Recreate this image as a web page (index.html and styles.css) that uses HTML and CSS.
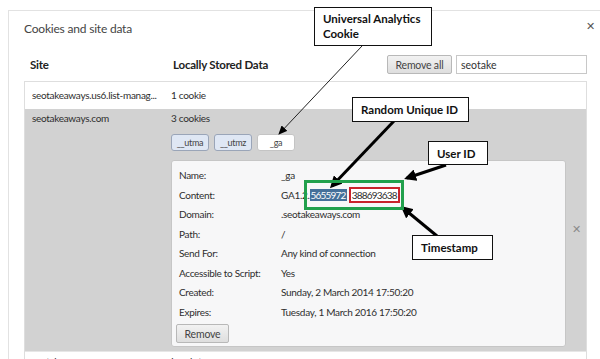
FILE: index.html
```html
<!DOCTYPE html>
<html lang="en">

<head>
    <meta charset="UTF-8">
    <title>Cookies and site data</title>
    <link rel="stylesheet" href="styles.css">
</head>

<body>
    <div class="dialog">
        <!-- Title bar -->
        <div class="titlebar">
            <h1>Cookies and site data</h1>
            <span class="close">&#x2715;</span>
        </div>

        <!-- Column headers, remove all and search -->
        <div class="toolbar">
            <div class="col-site">Site</div>
            <div class="col-data">Locally Stored Data</div>
            <button class="btn">Remove all</button>
            <input class="search" type="text" value="seotake">
        </div>

        <!-- Site list -->
        <div class="list">
            <div class="row">
                <div class="site">seotakeaways.us6.list-manag...</div>
                <div class="data">1 cookie</div>
            </div>

            <div class="row selected">
                <div class="site">seotakeaways.com</div>
                <div class="data">
                    <div>3 cookies</div>
                    <div class="chips">
                        <span class="chip">__utma</span>
                        <span class="chip">__utmz</span>
                        <span class="chip active">_ga</span>
                    </div>
                    <div class="details">
                        <div class="field"><span class="label">Name:</span><span>_ga</span></div>
                        <div class="field"><span class="label">Content:</span><span>GA1.2.<span class="sel">5655972</span> <span class="mark">388693638</span></span></div>
                        <div class="field"><span class="label">Domain:</span><span>.seotakeaways.com</span></div>
                        <div class="field"><span class="label">Path:</span><span>/</span></div>
                        <div class="field"><span class="label">Send For:</span><span>Any kind of connection</span></div>
                        <div class="field"><span class="label">Accessible to Script:</span><span>Yes</span></div>
                        <div class="field"><span class="label">Created:</span><span>Sunday, 2 March 2014 17:50:20</span></div>
                        <div class="field"><span class="label">Expires:</span><span>Tuesday, 1 March 2016 17:50:20</span></div>
                        <button class="btn small">Remove</button>
                    </div>
                </div>
                <span class="delete">&#x2715;</span>
            </div>

            <div class="row last">
                <div class="site">seotakeaways.com</div>
                <div class="data">Local storage</div>
            </div>
        </div>
    </div>

    <!-- Annotations drawn over the screenshot -->
    <div class="notes">
        <svg class="arrows" width="600" height="359" viewBox="0 0 600 359">
            <defs>
                <marker id="head" markerWidth="4" markerHeight="4" refX="3" refY="2" orient="auto" markerUnits="strokeWidth">
                    <path d="M0,0 L4,2 L0,4 z" fill="#000"/>
                </marker>
                <marker id="headthin" markerWidth="9" markerHeight="8" refX="8" refY="4" orient="auto" markerUnits="userSpaceOnUse">
                    <path d="M0,0 L9,4 L0,8 z" fill="#000"/>
                </marker>
            </defs>
            <line x1="362" y1="46" x2="279" y2="134" stroke="#222" stroke-width="1" marker-end="url(#headthin)"/>
            <line x1="394" y1="121" x2="332" y2="186" stroke="#000" stroke-width="3" marker-end="url(#head)"/>
            <line x1="446" y1="165" x2="407" y2="178" stroke="#000" stroke-width="3" marker-end="url(#head)"/>
            <line x1="437" y1="236" x2="403" y2="208" stroke="#000" stroke-width="3" marker-end="url(#head)"/>
        </svg>
        <div class="note note-ua">Universal Analytics<br>Cookie</div>
        <div class="note note-rid">Random Unique ID</div>
        <div class="note note-uid">User ID</div>
        <div class="note note-ts">Timestamp</div>
        <div class="frame"></div>
    </div>
</body>

</html>
```

FILE: styles.css
```css
/* Page */
body {
    margin: 0;
    background-color: #ffffff;
    font-family: 'Lato', 'Open Sans', sans-serif;
    font-size: 10px;
    letter-spacing: -0.3px;
    color: #2e2e2e;
    width: 600px;
    height: 359px;
    overflow: hidden;
    position: relative;
}

/* Dialog frame */
.dialog {
    margin: 10px 0 0 8px;
    height: 349px;
    border-top: 1px solid #e2e2e2;
    border-left: 1px solid #e2e2e2;
    box-sizing: border-box;
    padding: 0 13px 0 15px;
    overflow: hidden;
}

.titlebar {
    display: flex;
    justify-content: space-between;
    align-items: center;
    height: 26px;
    padding-top: 4px;
}

h1 {
    margin: 0;
    font-size: 12px;
    letter-spacing: -0.2px;
    font-weight: normal;
    color: #444;
}

.close {
    font-size: 11px;
    color: #555;
    margin-right: -8px;
    margin-top: -4px;
}

/* Header row with buttons */
.toolbar {
    display: flex;
    align-items: center;
    height: 19px;
    margin-top: 14px;
    margin-bottom: 7px;
}

.col-site {
    width: 143px;
    padding-left: 6px;
    font-weight: bold;
    font-size: 11.5px;
    letter-spacing: -0.2px;
    color: #222;
}

.col-data {
    flex: 1;
    font-weight: bold;
    font-size: 11.5px;
    letter-spacing: -0.2px;
    color: #222;
}

.btn {
    font-family: inherit;
    font-size: 10.5px;
    letter-spacing: -0.2px;
    color: #444;
    background: linear-gradient(#f2f2f2, #dedede);
    border: 1px solid #b8b8b8;
    border-radius: 2px;
    height: 19px;
    width: 65px;
    padding: 0;
}

.search {
    font-family: inherit;
    font-size: 10.5px;
    color: #333;
    width: 131px;
    height: 19px;
    box-sizing: border-box;
    margin-left: 4px;
    border: 1px solid #c8c8c8;
    padding: 0 4px;
}

/* Site list */
.list {
    border: 1px solid #dedede;
    border-bottom: none;
}

.row {
    display: flex;
    line-height: 18px;
    padding: 4px 0 5px;
    background: #fff;
    white-space: nowrap;
}

.row + .row {
    border-top: 1px solid #e6e6e6;
}

.row.selected {
    background: #d2d2d2;
    padding: 0 0 4px;
    border-top: none;
}

.row.last {
    padding-top: 0;
}

.site {
    width: 139px;
    padding-left: 7px;
    overflow: hidden;
}

.data {
    width: 395px;
}

.delete {
    flex: 1;
    align-self: center;
    text-align: center;
    font-size: 11px;
    color: #8a8a8a;
    padding-top: 2px;
}

/* Cookie chips */
.chips {
    display: flex;
    gap: 5px;
    margin: 7px 0 9px;
}

.chip {
    width: 38px;
    height: 17px;
    box-sizing: border-box;
    line-height: 15px;
    font-size: 9px;
    text-align: center;
    color: #444;
    background: #dfe7f4;
    border: 1px solid #9aa5b8;
    border-radius: 3px;
}

.chip.active {
    background: #fff;
    border-color: #c4c4c4;
}

/* Cookie details */
.details {
    background: #f7f7f8;
    border: 1px solid #c6c6c6;
    border-radius: 3px;
    padding: 5px 7px 3px;
}

.field {
    display: flex;
    line-height: 19.5px;
}

.label {
    width: 102px;
}

.sel {
    background: #45709a;
    color: #fff;
    padding: 0 1px;
    letter-spacing: -0.8px;
}

.mark {
    border: 2px solid #c9232b;
    background: #fff;
    padding: 0 1px;
    letter-spacing: -0.8px;
}

.btn.small {
    width: 53px;
    height: 19px;
    margin: 2px 0 0 -3px;
}

/* Annotation overlay */
.notes {
    position: absolute;
    left: 0;
    top: 0;
    width: 600px;
    height: 359px;
    pointer-events: none;
}

.arrows {
    position: absolute;
    left: 0;
    top: 0;
}

.note {
    position: absolute;
    box-sizing: border-box;
    background: #fff;
    border: 1px solid #111;
    font-family: 'Lato', sans-serif;
    font-weight: bold;
    font-size: 11.5px;
    letter-spacing: 0;
    line-height: 15px;
    color: #111;
    padding-left: 8px;
    white-space: nowrap;
}

.note-ua {
    left: 314px;
    top: 7px;
    width: 118px;
    height: 39px;
    padding-top: 3px;
}

.note-rid {
    left: 352px;
    top: 97px;
    width: 117px;
    height: 25px;
    padding-top: 4px;
}

.note-uid {
    left: 428px;
    top: 141px;
    width: 60px;
    height: 24px;
    padding-top: 4px;
}

.note-ts {
    left: 412px;
    top: 235px;
    width: 81px;
    height: 25px;
    padding-top: 4px;
}

.frame {
    position: absolute;
    left: 304px;
    top: 180px;
    width: 100px;
    height: 30px;
    box-sizing: border-box;
    border: 3px solid #21a04c;
}
```
